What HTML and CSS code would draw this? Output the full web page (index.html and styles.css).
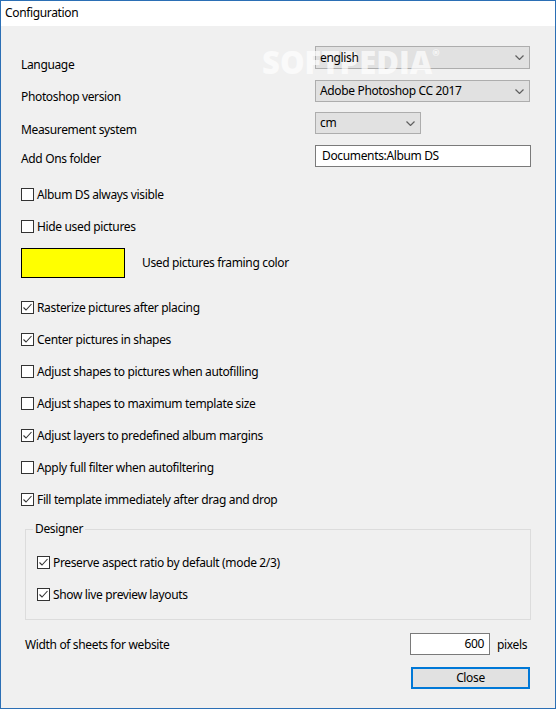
FILE: index.html
```html
<!DOCTYPE html>
<html lang="en">
<head>
    <meta charset="UTF-8">
    <title>Configuration</title>
    <link rel="stylesheet" href="styles.css">
</head>
<body>
<div class="window">
    <div class="titlebar">Configuration</div>

    <div class="content">
        <div class="field row-1">
            <div class="field-label">Language</div>
            <div class="combo wide"><span class="combo-text">english</span>
                <svg class="chevron" width="9" height="5" viewBox="0 0 9 5"><path d="M0.5 0.5 L4.5 4.5 L8.5 0.5" fill="none" stroke="#606060" stroke-width="1.2"/></svg>
            </div>
        </div>
        <div class="field row-2">
            <div class="field-label">Photoshop version</div>
            <div class="combo wide"><span class="combo-text">Adobe Photoshop CC 2017</span>
                <svg class="chevron" width="9" height="5" viewBox="0 0 9 5"><path d="M0.5 0.5 L4.5 4.5 L8.5 0.5" fill="none" stroke="#606060" stroke-width="1.2"/></svg>
            </div>
        </div>
        <div class="field row-3">
            <div class="field-label">Measurement system</div>
            <div class="combo small"><span class="combo-text">cm</span>
                <svg class="chevron" width="9" height="5" viewBox="0 0 9 5"><path d="M0.5 0.5 L4.5 4.5 L8.5 0.5" fill="none" stroke="#606060" stroke-width="1.2"/></svg>
            </div>
        </div>
        <div class="field row-4">
            <div class="field-label">Add Ons folder</div>
            <div class="textbox folder">Documents:Album DS</div>
        </div>

        <div class="options">
            <div class="check-row"><span class="box"></span>Album DS always visible</div>
            <div class="check-row"><span class="box"></span>Hide used pictures</div>
            <div class="color-row">
                <div class="swatch"></div>
                <div class="swatch-label">Used pictures framing color</div>
            </div>
            <div class="check-row"><span class="box checked"><svg width="11" height="11" viewBox="0 0 11 11"><path d="M1.5 5.5 L4 8 L9.5 2" fill="none" stroke="#333" stroke-width="1.1"/></svg></span>Rasterize pictures after placing</div>
            <div class="check-row"><span class="box checked"><svg width="11" height="11" viewBox="0 0 11 11"><path d="M1.5 5.5 L4 8 L9.5 2" fill="none" stroke="#333" stroke-width="1.1"/></svg></span>Center pictures in shapes</div>
            <div class="check-row"><span class="box"></span>Adjust shapes to pictures when autofilling</div>
            <div class="check-row"><span class="box"></span>Adjust shapes to maximum template size</div>
            <div class="check-row"><span class="box checked"><svg width="11" height="11" viewBox="0 0 11 11"><path d="M1.5 5.5 L4 8 L9.5 2" fill="none" stroke="#333" stroke-width="1.1"/></svg></span>Adjust layers to predefined album margins</div>
            <div class="check-row"><span class="box"></span>Apply full filter when autofiltering</div>
            <div class="check-row"><span class="box checked"><svg width="11" height="11" viewBox="0 0 11 11"><path d="M1.5 5.5 L4 8 L9.5 2" fill="none" stroke="#333" stroke-width="1.1"/></svg></span>Fill template immediately after drag and drop</div>
        </div>

        <fieldset class="group">
            <legend>Designer</legend>
            <div class="check-row"><span class="box checked"><svg width="11" height="11" viewBox="0 0 11 11"><path d="M1.5 5.5 L4 8 L9.5 2" fill="none" stroke="#333" stroke-width="1.1"/></svg></span>Preserve aspect ratio by default (mode 2/3)</div>
            <div class="check-row"><span class="box checked"><svg width="11" height="11" viewBox="0 0 11 11"><path d="M1.5 5.5 L4 8 L9.5 2" fill="none" stroke="#333" stroke-width="1.1"/></svg></span>Show live preview layouts</div>
        </fieldset>

        <div class="sheet-row">
            <div class="sheet-label">Width of sheets for website</div>
            <div class="textbox number">600</div>
            <div class="unit">pixels</div>
        </div>

        <div class="button-row">
            <div class="button">Close</div>
        </div>
    </div>

    <span class="watermark">SOFTPEDIA<sup>®</sup></span>
</div>
</body>
</html>
```

FILE: styles.css
```css
body {
    margin: 0;
    font-family: 'Noto Sans', 'Open Sans', sans-serif;
    font-size: 12px;
    letter-spacing: -0.35px;
    color: #000;
}

.window {
    position: relative;
    width: 556px;
    height: 709px;
    box-sizing: border-box;
    border: 1px solid #2b6fb5;
    background: #f0f0f0;
    overflow: hidden;
}

.titlebar {
    height: 25px;
    line-height: 24px;
    padding-left: 4px;
    background: #fff;
}

.content {
    padding: 20px 0 0 20px;
}

/* top fields */
.field {
    display: flex;
    align-items: flex-start;
}

.field-label {
    width: 294px;
    line-height: 16px;
}

.row-1 { height: 34px; }
.row-1 .field-label { padding-top: 11px; }
.row-2 { height: 32px; }
.row-2 .field-label { padding-top: 9px; }
.row-3 { height: 33px; }
.row-3 .field-label { padding-top: 10px; }
.row-4 { height: 22px; margin-bottom: 11px; }
.row-4 .field-label { padding-top: 6px; }

.combo {
    position: relative;
    box-sizing: border-box;
    height: 23px;
    line-height: 21px;
    padding-left: 4px;
    background: #e1e1e1;
    border: 1px solid #adadad;
}

/* text stays crisp above the watermark */
.combo-text {
    position: relative;
    z-index: 2;
}

.combo.wide { width: 215px; }
.combo.small { width: 106px; height: 22px; line-height: 20px; }
.row-2 .combo { height: 22px; line-height: 20px; }

.chevron {
    position: absolute;
    right: 5px;
    top: 8px;
}

.textbox {
    box-sizing: border-box;
    height: 22px;
    line-height: 20px;
    background: #fff;
    border: 1px solid #7a7a7a;
}

.textbox.folder {
    width: 216px;
    padding-left: 6px;
}

/* check boxes */
.check-row {
    display: flex;
    align-items: center;
    height: 32px;
}

.box {
    display: flex;
    align-items: center;
    justify-content: center;
    width: 13px;
    height: 13px;
    box-sizing: border-box;
    border: 1px solid #333;
    background: #fff;
    margin-right: 3px;
}

.color-row {
    display: flex;
    align-items: flex-start;
    height: 43px;
    padding-top: 6px;
}

.swatch {
    width: 104px;
    height: 30px;
    box-sizing: border-box;
    background: #ffff00;
    border: 1px solid #000;
}

.swatch-label {
    margin-left: 17px;
    line-height: 30px;
}

/* Designer group */
.group {
    width: 506px;
    box-sizing: border-box;
    margin: 6px 0 0 4px;
    padding: 9px 11px 9px;
    border: 1px solid #dcdcdc;
}

.group legend {
    padding: 0 2px;
    margin-left: -4px;
    line-height: 16px;
}

/* bottom rows */
.sheet-row {
    display: grid;
    grid-template-columns: 389px 80px auto;
    align-items: center;
    margin-top: 13px;
    height: 22px;
}

.sheet-label {
    padding-left: 4px;
}

.textbox.number {
    text-align: right;
    padding-right: 5px;
}

.unit {
    margin-left: 7px;
}

.button-row {
    margin-top: 12px;
    padding-left: 390px;
}

.button {
    width: 119px;
    height: 22px;
    box-sizing: border-box;
    line-height: 18px;
    text-align: center;
    background: #e1e1e1;
    border: 2px solid #0078d7;
}

.watermark {
    position: absolute;
    z-index: 1;
    left: 261px;
    top: 40px;
    font-family: 'Open Sans', sans-serif;
    font-weight: 800;
    font-size: 31px;
    letter-spacing: 0;
    color: rgba(255, 255, 255, 0.7);
    pointer-events: none;
}

.watermark sup {
    font-size: 9px;
    vertical-align: top;
    position: relative;
    top: 5px;
}
```
